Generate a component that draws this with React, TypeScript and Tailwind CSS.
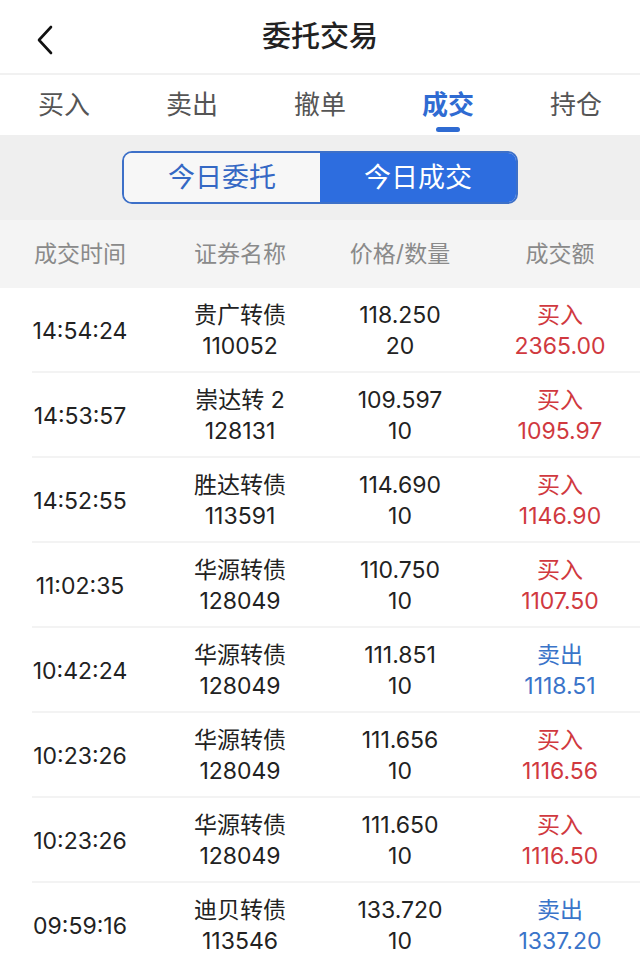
import React from "react";

type Row = { time: string; name: string; code: string; price: string; qty: string; side: "买入" | "卖出"; amount: string };

const rows: Row[] = [
  { time: "14:54:24", name: "贵广转债", code: "110052", price: "118.250", qty: "20", side: "买入", amount: "2365.00" },
  { time: "14:53:57", name: "崇达转 2", code: "128131", price: "109.597", qty: "10", side: "买入", amount: "1095.97" },
  { time: "14:52:55", name: "胜达转债", code: "113591", price: "114.690", qty: "10", side: "买入", amount: "1146.90" },
  { time: "11:02:35", name: "华源转债", code: "128049", price: "110.750", qty: "10", side: "买入", amount: "1107.50" },
  { time: "10:42:24", name: "华源转债", code: "128049", price: "111.851", qty: "10", side: "卖出", amount: "1118.51" },
  { time: "10:23:26", name: "华源转债", code: "128049", price: "111.656", qty: "10", side: "买入", amount: "1116.56" },
  { time: "10:23:26", name: "华源转债", code: "128049", price: "111.650", qty: "10", side: "买入", amount: "1116.50" },
  { time: "09:59:16", name: "迪贝转债", code: "113546", price: "133.720", qty: "10", side: "卖出", amount: "1337.20" },
];

const tabs = ["买入", "卖出", "撤单", "成交", "持仓"];

export default function App() {
  return (
    <div
      className="w-[640px] h-[966px] overflow-hidden bg-white"
      style={{ fontFamily: 'Inter, "Noto Sans CJK SC", sans-serif' }}
    >
      {/* Header */}
      <div className="relative h-[75px] flex items-center justify-center border-b-2 border-[#f1f1f1]">
        <svg className="absolute left-[34px] top-[24px]" width="22" height="32" viewBox="0 0 22 32" fill="none">
          <path d="M17 3 L5 16 L17 29" stroke="#111" strokeWidth="2.6" strokeLinecap="round" strokeLinejoin="round" />
        </svg>
        <span className="text-[29px] text-[#222] font-medium leading-none">委托交易</span>
      </div>

      {/* Tabs */}
      <div className="grid grid-cols-5 h-[60px]">
        {tabs.map((t) => {
          const active = t === "成交";
          return (
            <div key={t} className="relative flex items-center justify-center">
              <span className={`text-[26px] leading-none ${active ? "text-[#2f6bd2] font-bold" : "text-[#555]"}`}>{t}</span>
              {active && <div className="absolute bottom-[3px] left-1/2 -translate-x-1/2 w-[24px] h-[5px] rounded-full bg-[#2f6bd2]" />}
            </div>
          );
        })}
      </div>

      {/* Segmented */}
      <div className="bg-[#efefef] h-[85px] flex items-center justify-center">
        <div className="flex w-[396px] h-[53px] rounded-[10px] border-2 border-[#3d70c8] overflow-hidden">
          <div className="flex-1 bg-[#f7f7f7] flex items-center justify-center text-[27px] text-[#3568c4] leading-none">今日委托</div>
          <div className="flex-1 bg-[#2d6ddf] flex items-center justify-center text-[27px] text-white leading-none">今日成交</div>
        </div>
      </div>

      {/* Table header */}
      <div className="grid grid-cols-4 h-[68px] bg-[#f4f4f4] items-center text-[23px] text-[#8a8a8a] leading-none">
        <div className="text-center">成交时间</div>
        <div className="text-center">证券名称</div>
        <div className="text-center">价格/数量</div>
        <div className="text-center">成交额</div>
      </div>

      {/* Rows */}
      <div>
        {rows.map((r, i) => {
          const color = r.side === "买入" ? "text-[#d0393f]" : "text-[#3a74c9]";
          return (
            <div key={i} className="flex flex-col">
              <div className="h-[83px] grid grid-cols-4 items-center text-[23px] text-[#222] leading-[31px] pt-[3px]">
                <div className="text-center">{r.time}</div>
                <div className="text-center">
                  <div>{r.name}</div>
                  <div>{r.code}</div>
                </div>
                <div className="text-center">
                  <div>{r.price}</div>
                  <div>{r.qty}</div>
                </div>
                <div className={`text-center ${color}`}>
                  <div>{r.side}</div>
                  <div>{r.amount}</div>
                </div>
              </div>
              <div className="ml-[32px] h-[2px] bg-[#f3f3f3]" />
            </div>
          );
        })}
      </div>
    </div>
  );
}
